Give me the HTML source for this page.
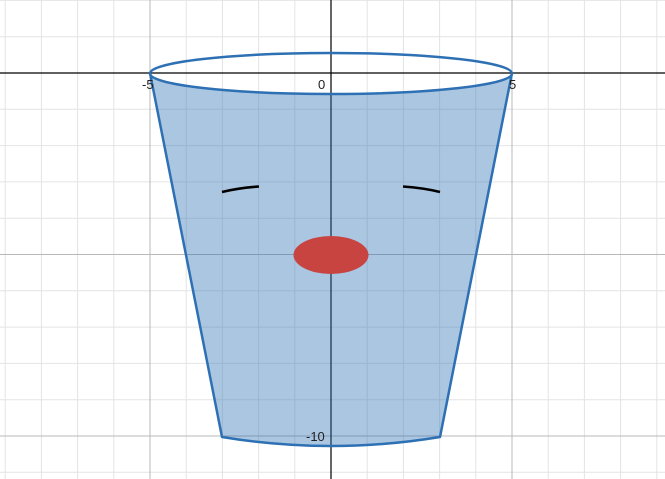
<!DOCTYPE html>
<html><head><meta charset="utf-8"><style>
html,body{margin:0;padding:0;background:#fff;overflow:hidden}
svg{display:block}
text{font-family:"Liberation Sans",sans-serif;font-size:13px;fill:#222}
</style></head><body>
<svg width="665" height="479" viewBox="0 0 665 479" xmlns="http://www.w3.org/2000/svg">
<g stroke="#e4e4e4" stroke-width="1">
<line x1="5.2" y1="0" x2="5.2" y2="479"/><line x1="41.4" y1="0" x2="41.4" y2="479"/><line x1="77.6" y1="0" x2="77.6" y2="479"/><line x1="113.8" y1="0" x2="113.8" y2="479"/>
<line x1="186.2" y1="0" x2="186.2" y2="479"/><line x1="222.4" y1="0" x2="222.4" y2="479"/><line x1="258.6" y1="0" x2="258.6" y2="479"/><line x1="294.8" y1="0" x2="294.8" y2="479"/>
<line x1="367.2" y1="0" x2="367.2" y2="479"/><line x1="403.4" y1="0" x2="403.4" y2="479"/><line x1="439.6" y1="0" x2="439.6" y2="479"/><line x1="475.8" y1="0" x2="475.8" y2="479"/>
<line x1="548.2" y1="0" x2="548.2" y2="479"/><line x1="584.4" y1="0" x2="584.4" y2="479"/><line x1="620.6" y1="0" x2="620.6" y2="479"/><line x1="656.8" y1="0" x2="656.8" y2="479"/>
<line x1="0" y1="0.4" x2="665" y2="0.4"/><line x1="0" y1="36.7" x2="665" y2="36.7"/>
<line x1="0" y1="109.3" x2="665" y2="109.3"/><line x1="0" y1="145.6" x2="665" y2="145.6"/><line x1="0" y1="181.9" x2="665" y2="181.9"/><line x1="0" y1="218.2" x2="665" y2="218.2"/>
<line x1="0" y1="290.8" x2="665" y2="290.8"/><line x1="0" y1="327.1" x2="665" y2="327.1"/><line x1="0" y1="363.4" x2="665" y2="363.4"/><line x1="0" y1="399.7" x2="665" y2="399.7"/>
<line x1="0" y1="472.3" x2="665" y2="472.3"/>
</g>
<g stroke="#b8b8b8" stroke-width="1">
<line x1="150" y1="0" x2="150" y2="479"/><line x1="512" y1="0" x2="512" y2="479"/>
<line x1="0" y1="254.5" x2="665" y2="254.5"/><line x1="0" y1="436" x2="665" y2="436"/>
</g>
<g stroke="#000" stroke-width="1.2">
<line x1="331" y1="0" x2="331" y2="479"/><line x1="0" y1="73" x2="665" y2="73"/>
</g>
<path d="M150,73 L222,437 Q331,455 440,437 L512,73 A181,20.5 0 0 1 150,73 Z" fill="#2d70b3" fill-opacity="0.4" stroke="none"/>
<g fill="none" stroke="#2d70b3" stroke-width="2.5" stroke-linejoin="round">
<ellipse cx="331" cy="73.5" rx="181" ry="20.5"/>
<path d="M150,73 L222,437 Q331,455 440,437 L512,73"/>
</g>
<path d="M222,192 Q238,188 259,186.5" stroke="#000" stroke-width="2.5" fill="none"/>
<path d="M403,186.5 Q424,188 440,192" stroke="#000" stroke-width="2.5" fill="none"/>
<ellipse cx="331" cy="255" rx="37.5" ry="19" fill="#c74440"/>
<text x="142" y="89">-5</text>
<text x="509" y="89">5</text>
<text x="318" y="89">0</text>
<text x="306" y="441">-10</text>
</svg>
</body></html>
